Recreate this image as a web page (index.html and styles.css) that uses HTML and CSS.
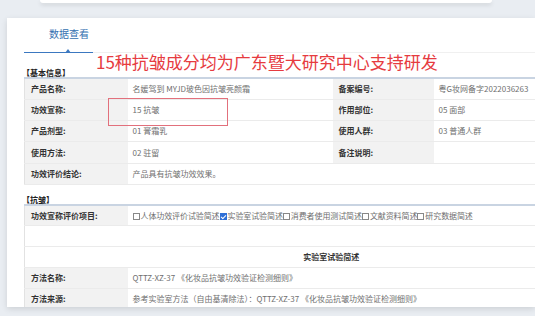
FILE: index.html
```html
<!DOCTYPE html>
<html lang="zh-CN">
<head>
  <meta charset="UTF-8">
  <title>数据查看</title>
  <link rel="stylesheet" href="styles.css">
</head>
<body>
  <div class="top-card"></div>

  <div class="panel">
    <div class="tabs">
      <span class="tab active">数据查看</span>
    </div>

    <div class="section-title">【基本信息】</div>
    <table class="info">
      <tr>
        <td class="label">产品名称:</td>
        <td class="value">名媛驾到 MYJD玻色因抗皱亮颜霜</td>
        <td class="label">备案编号:</td>
        <td class="value">粤G妆网备字2022036263</td>
      </tr>
      <tr>
        <td class="label">功效宣称:</td>
        <td class="value">15 抗皱</td>
        <td class="label">作用部位:</td>
        <td class="value">05 面部</td>
      </tr>
      <tr>
        <td class="label">产品剂型:</td>
        <td class="value">01 膏霜乳</td>
        <td class="label">使用人群:</td>
        <td class="value">03 普通人群</td>
      </tr>
      <tr>
        <td class="label">使用方法:</td>
        <td class="value">02 驻留</td>
        <td class="label">备注说明:</td>
        <td class="value"></td>
      </tr>
      <tr>
        <td class="label">功效评价结论:</td>
        <td class="value" colspan="3">产品具有抗皱功效效果。</td>
      </tr>
    </table>

    <div class="section-title second">【抗皱】</div>
    <table class="info detail">
      <tr>
        <td class="label">功效宣称评价项目:</td>
        <td class="value checks">
          <span class="box"></span>人体功效评价试验简述<span class="box checked"></span>实验室试验简述<span class="box"></span>消费者使用测试简述<span class="box"></span>文献资料简述<span class="box"></span>研究数据简述
        </td>
      </tr>
      <tr class="blank">
        <td colspan="2"></td>
      </tr>
      <tr class="blank">
        <td></td>
        <td class="sub-head">实验室试验简述</td>
      </tr>
      <tr>
        <td class="label">方法名称:</td>
        <td class="value">QTTZ-XZ-37 《化妆品抗皱功效验证检测细则》</td>
      </tr>
      <tr>
        <td class="label">方法来源:</td>
        <td class="value">参考实验室方法（自由基清除法）：QTTZ-XZ-37 《化妆品抗皱功效验证检测细则》</td>
      </tr>
    </table>
  </div>

  <!-- annotations laid over the screenshot -->
  <div class="caption">15种抗皱成分均为广东暨大研究中心支持研发</div>
  <div class="highlight"></div>
</body>
</html>
```

FILE: styles.css
```css
* {
  box-sizing: border-box;
}
body {
  margin: 0;
  width: 535px;
  height: 316px;
  overflow: hidden;
  background-color: #e9edf2;
  font-family: "Noto Sans CJK SC", "Noto Sans", sans-serif;
  position: relative;
}
.top-card {
  margin: 0 43px 0 40px;
  height: 3px;
  background: #fff;
  border-radius: 0 0 4px 4px;
  box-shadow: 0 2px 4px rgba(0,0,0,0.12);
}
.panel {
  margin: 15px 0 0 7px;
  height: 289px;
  padding-left: 17px;
  background: #fff;
  box-shadow: 0 2px 6px rgba(0,0,0,0.12);
  overflow: hidden;
}
.tabs {
  height: 35px;
  border-bottom: 1px solid #3b78c0;
  padding-left: 25px;
  position: relative;
}
.tab {
  display: inline-block;
  margin-top: 8px;
  font-size: 10px;
  line-height: 16px;
  color: #3470b0;
  position: relative;
}
.tab.active::after {
  content: "";
  position: absolute;
  left: 16px;
  bottom: -11px;
  border-left: 3px solid transparent;
  border-right: 3px solid transparent;
  border-bottom: 4px solid #3b78c0;
}
.section-title {
  margin: 15px 0 0 -2px;
  font-size: 8px;
  line-height: 9px;
  font-weight: bold;
  color: #222;
}
.section-title.second {
  margin-top: 10px;
}
table.info {
  width: 511px;
  border-collapse: collapse;
  border-top: 2px solid #c9d4e2;
  border-left: 1px solid #e2e2e2;
  table-layout: fixed;
}
.info td {
  height: 21.3px;
  padding: 0 0 1px 5px;
  border-bottom: 1px solid #ebebeb;
  font-size: 8px;
  white-space: nowrap;
}
.info td.label {
  width: 103px;
  background: #f2f2f2;
  color: #333;
  font-weight: bold;
  padding-left: 6px;
}
.info tr td:nth-child(2) {
  width: 205px;
}
.info tr td:nth-child(3) {
  width: 101px;
}
.info td.value {
  color: #6f6f6f;
}
.detail td {
  height: 21px;
}
.detail tr td:nth-child(2) {
  width: auto;
}
.detail tr.blank td {
  height: 21px;
}
.detail td.sub-head {
  text-align: center;
  font-weight: bold;
  color: #333;
  padding-left: 0;
}
.checks {
  letter-spacing: -0.1px;
}
.box {
  display: inline-block;
  width: 7px;
  height: 7px;
  border: 1px solid #888;
  background: #fff;
  vertical-align: -1px;
  margin-right: 1px;
  position: relative;
}
.box.checked {
  background: #2f6fd6;
  border-color: #2f6fd6;
}
.box.checked::after {
  content: "";
  position: absolute;
  left: 1px;
  top: 0;
  width: 2px;
  height: 4px;
  border-right: 1px solid #fff;
  border-bottom: 1px solid #fff;
  transform: rotate(45deg);
}
.caption {
  position: absolute;
  left: 93px;
  top: 52px;
  padding-left: 3px;
  width: 442px;
  font-size: 17px;
  line-height: 18px;
  color: #e63b3f;
  background: #fff;
  border-top: 1px solid #f0f0f0;
}
.highlight {
  position: absolute;
  left: 108px;
  top: 98px;
  width: 120px;
  height: 28px;
  border: 1.5px solid #e2707c;
}
```
